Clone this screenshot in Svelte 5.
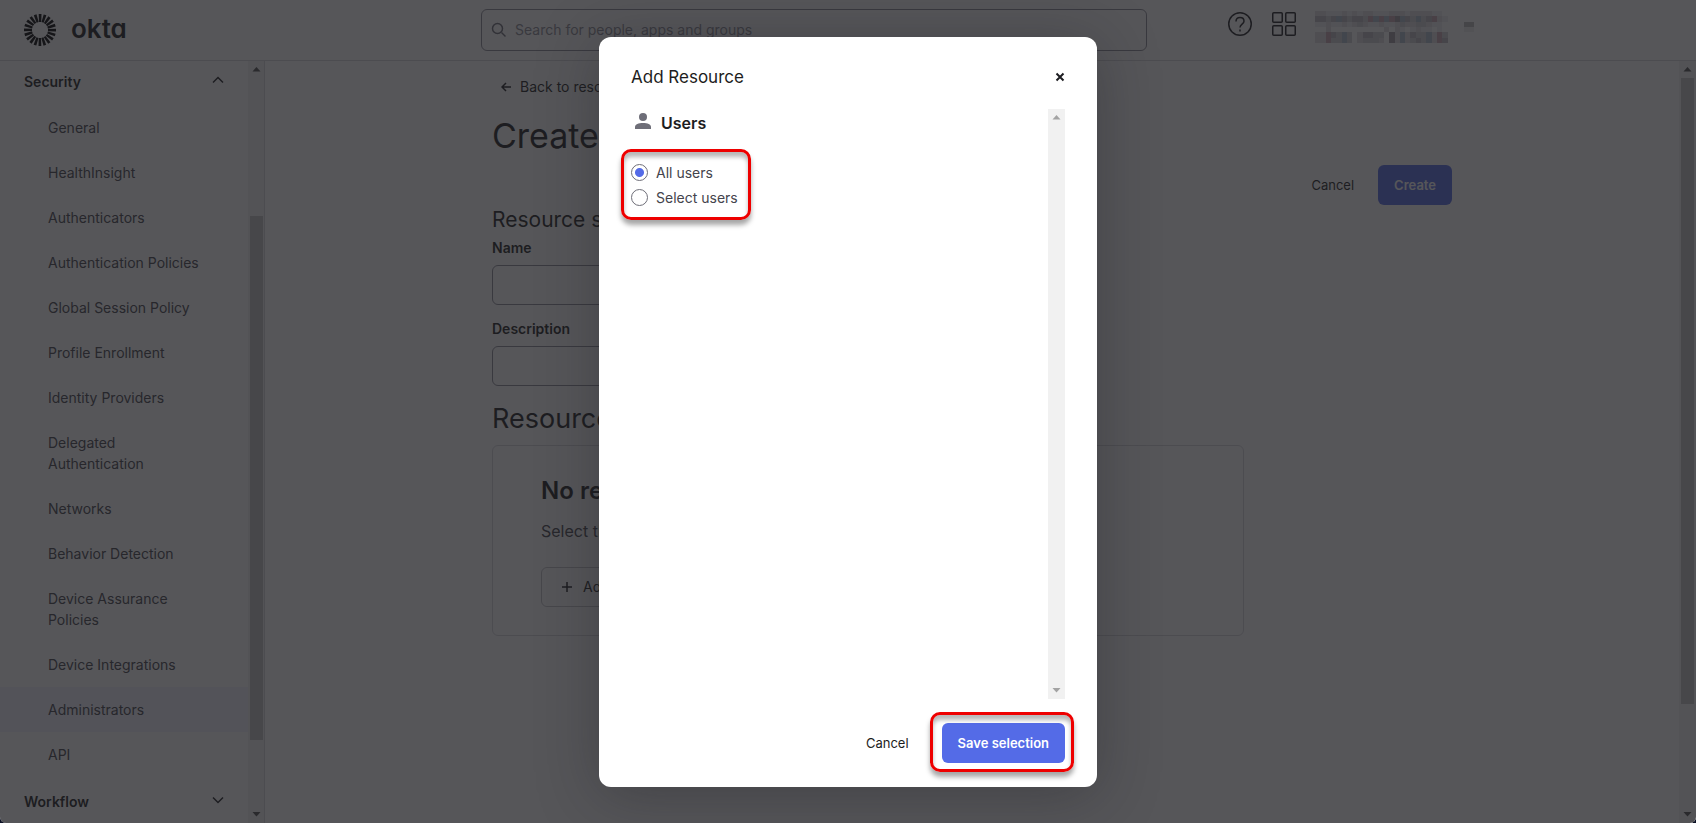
<script>
    const securityItems = [
        'General',
        'HealthInsight',
        'Authenticators',
        'Authentication Policies',
        'Global Session Policy',
        'Profile Enrollment',
        'Identity Providers',
        'Delegated Authentication',
        'Networks',
        'Behavior Detection',
        'Device Assurance Policies',
        'Device Integrations',
        'Administrators',
        'API',
    ];

    const current = 'Administrators';

    let scope = $state('all');

    const rays = Array.from({ length: 20 }, (_, i) => i * 18);

    // masked account name, one character per block
    const mask = [
        '2211121212211122212222110',
        '4434b43443rbrbr5b43b34r21',
        '1121121232112112322332110',
        '0020000000000202101211010',
        '22r43b3024433052b2433b2r3',
        '22r33b3023332052b2343b2r4',
    ];
    const shades = {
        0: '#fff', 1: '#f0f0f1', 2: '#e2e0e2', 3: '#d2d2d6', 4: '#c0bcc2', 5: '#a29da2',
        r: '#c9a9b4', b: '#aebfce',
    };
</script>

{#snippet scrollbar(cls)}
    <div class="scrollbar {cls}" aria-hidden="true">
        <svg width="9" height="5" viewBox="0 0 9 5"><path d="M4.500 0 8.500 4.500h-8z" /></svg>
        <div class="track"><div class="thumb"></div></div>
        <svg width="9" height="5" viewBox="0 0 9 5"><path d="M4.500 4.500.500 0h8z" /></svg>
    </div>
{/snippet}

<div class="app">
    <header class="topbar">
        <a class="logo" href="#home">
            <svg width="32" height="32" viewBox="-16 -16 32 32">
                {#each rays as angle}
                    <path d="M-1 -8 -1.300 -16h2.800l-.300 8z" transform="rotate({angle})" />
                {/each}
            </svg>
            <span>okta</span>
        </a>
        <div class="tools">
            <label class="search">
                <svg width="16" height="16" viewBox="0 0 16 16"><circle cx="6.500" cy="6.500" r="5" /><path d="m10.500 10.500 4 4" /></svg>
                <input type="search" aria-label="Search" placeholder="Search for people, apps and groups" />
            </label>
            <div class="account">
                <button class="icon" aria-label="Help">
                    <svg width="24" height="24" viewBox="0 0 24 24">
                        <circle cx="12" cy="12" r="11.250" />
                        <path d="M8 9.500C8 7 9.700 5.500 12 5.500S16 7 16 9.200c0 2.900-4 3-4 6.300" />
                        <path d="M12 17.500v2" />
                    </svg>
                </button>
                <button class="icon" aria-label="Apps">
                    <svg width="24" height="24" viewBox="0 0 24 24">
                        <rect x=".75" y=".75" width="9.500" height="9.500" rx="1" />
                        <rect x="13.750" y=".75" width="9.500" height="9.500" rx="1" />
                        <rect x=".75" y="13.750" width="9.500" height="9.500" rx="1" />
                        <rect x="13.750" y="13.750" width="9.500" height="9.500" rx="1" />
                    </svg>
                </button>
                <svg class="mask" width="160" height="32" viewBox="0 0 160 32" shape-rendering="crispEdges">
                    {#each mask as row, y}
                        {#each row as level, x}
                            <rect x={x * 5.3} y={y * 5.3} width="5.300" height="5.300" fill={shades[level]} />
                        {/each}
                    {/each}
                    <rect x="149" y="11" width="10" height="5" fill="#bbb" />
                    <rect x="149" y="16" width="10" height="5" fill="#eee" />
                </svg>
            </div>
        </div>
    </header>

    <div class="below">
        <aside>
            <nav>
                <button class="group">
                    Security
                    <svg width="12" height="8" viewBox="0 0 12 8"><path d="m1 6.500 5-5 5 5" /></svg>
                </button>
                <ul>
                    {#each securityItems as item}
                        <li><a href="#nav" class:current={item === current}><span>{item}</span></a></li>
                    {/each}
                </ul>
                <button class="group last">
                    Workflow
                    <svg width="12" height="8" viewBox="0 0 12 8"><path d="m1 1.500 5 5 5-5" /></svg>
                </button>
            </nav>
            {@render scrollbar('side')}
        </aside>

        <main>
            <div class="column">
                <a class="back" href="#sets">
                    <svg width="10" height="10" viewBox="0 0 10 10"><path d="M10 5H1M5 1 1 5l4 4" /></svg>
                    Back to resource
                </a>
                <h1>Create</h1>
                <div class="actions">
                    <button class="plain">Cancel</button>
                    <button class="primary">Create</button>
                </div>
                <h2>Resource set</h2>
                <div class="field">
                    <label for="name">Name</label>
                    <input id="name" type="text" />
                </div>
                <div class="field">
                    <label for="description">Description</label>
                    <input id="description" type="text" />
                </div>
                <h2 class="big">Resources</h2>
                <section class="card">
                    <h3>No resources</h3>
                    <p>Select the resources</p>
                    <button class="add">
                        <svg width="10" height="10" viewBox="0 0 10 10"><path d="M5 0v10M0 5h10" /></svg>
                        Add resource
                    </button>
                </section>
            </div>
            {@render scrollbar('page')}
        </main>
    </div>

    <div class="backdrop">
        <div class="modal" role="dialog" aria-modal="true" aria-labelledby="title">
            <div class="modal-head">
                <h2 id="title">Add Resource</h2>
                <button class="close" aria-label="Close">
                    <svg width="10" height="10" viewBox="0 0 10 10"><path d="m1.500 1.500 7 7m0-7-7 7" /></svg>
                </button>
            </div>
            <div class="modal-body">
                <div class="picker">
                    <h3>
                        <svg width="16" height="16" viewBox="0 0 16 16"><circle cx="8" cy="4" r="4" /><path d="M0 16v-2c0-2.800 3.500-4 8-4s8 1.200 8 4v2z" /></svg>
                        Users
                    </h3>
                    <div class="options marked" role="radiogroup" aria-label="Users">
                        <label><input type="radio" name="scope" value="all" bind:group={scope} />All users</label>
                        <label><input type="radio" name="scope" value="select" bind:group={scope} />Select users</label>
                    </div>
                </div>
                {@render scrollbar('inner')}
            </div>
            <div class="modal-foot">
                <button class="plain">Cancel</button>
                <div class="save marked"><button class="primary">Save selection</button></div>
            </div>
        </div>
    </div>
</div>

<style>
    :global(body) {
        background: #0b1024;
    }

    .app {
        position: relative;
        display: flex;
        flex-direction: column;
        height: 100vh;
        overflow: hidden;
        border-radius: 0 0 6px 6px;
        background: #fff;
        color: #1d1d21;
        font-family: Inter, "Liberation Sans", sans-serif;
        font-size: 14px;
        line-height: 20px;
    }

    .app * {
        box-sizing: border-box;
    }

    h1, h2, h3, p, ul {
        margin: 0;
        padding: 0;
        font-weight: 400;
    }

    a {
        color: inherit;
        text-decoration: none;
    }

    button, input {
        font: inherit;
        color: inherit;
    }

    button {
        padding: 0;
        border: 0;
        background: none;
        cursor: pointer;
    }

    svg {
        flex: none;
        display: block;
    }

    .topbar {
        display: flex;
        flex: none;
        height: 61px;
        border-bottom: 1px solid #d7d7dc;
    }

    .logo {
        display: flex;
        align-items: center;
        gap: 15px;
        flex: none;
        width: 265px;
        padding-left: 24px;
    }

    .logo span {
        padding-bottom: 2px;
        font-size: 26px;
        font-weight: 600;
        font-feature-settings: "cv11";
    }

    .tools {
        display: flex;
        align-items: center;
        justify-content: space-between;
        flex: 1;
        max-width: 999px;
        margin: 0 auto;
    }

    .search {
        display: flex;
        align-items: center;
        gap: 8px;
        width: 666px;
        height: 42px;
        padding: 0 9px;
        border: 1px solid #8c8c96;
        border-radius: 6px;
    }

    .search svg, .icon svg, .group svg, .back svg, .add svg, .close svg {
        fill: none;
        stroke: #1d1d21;
        stroke-width: 1.5;
    }

    .search svg {
        stroke: #6e6e78;
    }

    .search input {
        flex: 1;
        padding: 0;
        border: 0;
        outline: 0;
        background: none;
    }

    .search input::placeholder {
        color: #8c8c96;
    }

    .account {
        display: flex;
        gap: 20px;
        padding: 0 5px 12px 0;
    }

    .mask {
        align-self: flex-end;
        margin: 0 0 -6px -1px;
    }

    .below {
        display: flex;
        flex: 1;
        min-height: 0;
    }

    aside {
        display: flex;
        flex: none;
        width: 265px;
        overflow: hidden;
        border-right: 1px solid #d7d7dc;
    }

    nav {
        flex: 1;
    }

    .group {
        display: flex;
        align-items: center;
        justify-content: space-between;
        width: 100%;
        height: 44px;
        padding: 0 24px 2px;
        font-weight: 600;
    }

    .group svg {
        margin-bottom: 4px;
    }

    .group.last {
        height: 52px;
    }

    li {
        list-style: none;
    }

    li a {
        display: block;
        padding: 12px 40px 12px 48px;
        color: #44444c;
        line-height: 21px;
    }

    li a.current {
        background: #f2f3fd;
    }

    .scrollbar {
        display: flex;
        flex-direction: column;
        align-items: center;
        flex: none;
        width: 17px;
        padding: 6px 0;
        background: #f1f1f1;
    }

    .scrollbar.side {
        width: 16px;
    }

    .scrollbar svg {
        fill: #505050;
    }

    .track {
        flex: 1;
        width: 13px;
        margin: 6px 0;
    }

    .side .thumb {
        height: 72%;
        margin-top: 138px;
        background: #c1c1c1;
    }

    .page .thumb {
        height: 86%;
        background: #c1c1c1;
    }

    .inner svg {
        fill: #a3a3a3;
    }

    main {
        display: flex;
        flex: 1;
    }

    .column {
        flex: 1;
        max-width: 960px;
        margin: 0 auto;
        padding-top: 16px;
    }

    .back {
        display: flex;
        align-items: center;
        gap: 9px;
        padding-left: 9px;
    }

    h1 {
        margin-top: 19px;
        font-size: 34px;
        line-height: 40px;
    }

    .actions, .modal-foot {
        display: flex;
        align-items: center;
        justify-content: flex-end;
        gap: 24px;
    }

    .actions {
        margin-top: 9px;
    }

    .plain, .primary {
        font-size: 13px;
    }

    .primary {
        height: 40px;
        padding: 0 16px;
        border-radius: 6px;
        background: #546be7;
        color: #fff;
        font-weight: 600;
    }

    .column h2 {
        font-size: 21px;
        line-height: 29px;
    }

    .column h2.big {
        margin: 16px 0 9px;
        font-size: 27px;
        line-height: 34px;
    }

    .field {
        margin-bottom: 10px;
        max-width: 480px;
    }

    .field label {
        display: block;
        padding: 4px 0 7px;
        font-weight: 600;
    }

    .field input {
        display: block;
        width: 100%;
        height: 40px;
        padding: 0 12px;
        border: 1px solid #8c8c96;
        border-radius: 6px;
        background: none;
    }

    .card {
        max-width: 752px;
        padding: 29px 48px 28px;
        border: 1px solid #d7d7dc;
        border-radius: 6px;
    }

    .card h3 {
        font-size: 24px;
        line-height: 32px;
        font-weight: 600;
    }

    .card p {
        margin: 12px 0 24px;
        color: #44444c;
        font-size: 16px;
        line-height: 24px;
    }

    .add {
        display: flex;
        align-items: center;
        gap: 11px;
        height: 40px;
        padding: 0 20px;
        border: 1px solid #c1c1c8;
        border-radius: 6px;
    }

    .backdrop {
        position: absolute;
        inset: 0;
        display: flex;
        justify-content: center;
        padding: 37px 0 36px;
        background: rgba(29, 29, 33, 0.75);
    }

    .modal {
        display: flex;
        flex-direction: column;
        width: 498px;
        padding: 0 32px 24px;
        border-radius: 12px;
        background: #fff;
        box-shadow: 0 8px 60px rgba(29, 29, 33, 0.35);
    }

    .modal-head {
        display: flex;
        align-items: center;
        justify-content: space-between;
        height: 72px;
        padding-top: 8px;
    }

    .modal-head h2 {
        font-size: 17px;
        line-height: 24px;
    }

    .close svg {
        stroke-width: 2;
    }

    .modal-body {
        display: flex;
        flex: 1;
    }

    .picker {
        flex: 1;
    }

    .picker h3 {
        display: flex;
        align-items: center;
        gap: 10px;
        padding: 2px 0 0 4px;
        font-size: 16px;
        line-height: 24px;
        font-weight: 600;
    }

    .picker h3 svg {
        fill: #6e6e78;
        margin-bottom: 4px;
    }

    .marked {
        position: relative;
    }

    .marked::after {
        content: "";
        position: absolute;
        inset: -11px -9px -9px -12px;
        border: 3px solid #ee0000;
        border-radius: 10px;
        box-shadow: 0 5px 5px rgba(0, 0, 0, 0.35), inset 0 5px 4px rgba(0, 0, 0, 0.28);
        pointer-events: none;
    }

    .options {
        width: fit-content;
        margin-top: 25px;
        color: #44444c;
    }

    .options.marked::after {
        inset: -11px -13px -10px -10px;
    }

    .options label {
        display: flex;
        align-items: center;
        gap: 8px;
        height: 25px;
    }

    .options input {
        appearance: none;
        width: 17px;
        height: 17px;
        margin: 0;
        border: 1px solid #6e6e78;
        border-radius: 50%;
    }

    .options input:checked {
        background: radial-gradient(circle, #546be7 4px, transparent 5px);
    }

    .modal-foot {
        gap: 33px;
        margin-top: 24px;
    }
</style>
